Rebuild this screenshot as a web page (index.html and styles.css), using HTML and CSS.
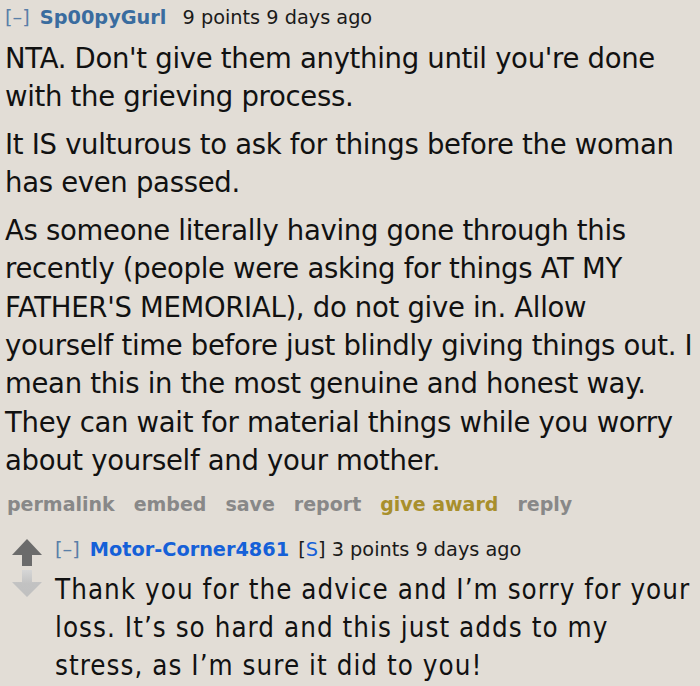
FILE: index.html
```html
<!DOCTYPE html>
<html>
<head>
<meta charset="utf-8">
<link rel="stylesheet" href="styles.css">
</head>
<body>
<div class="comment">
  <div class="tagline">
    <span class="expand">[–]</span>
    <span class="author">Sp00pyGurl</span>
    <span class="score">9 points 9 days ago</span>
  </div>
  <div class="body">
    <p>NTA. Don't give them anything until you're done with the grieving process.</p>
    <p>It IS vulturous to ask for things before the woman has even passed.</p>
    <p>As someone literally having gone through this recently (people were asking for things AT MY FATHER'S MEMORIAL), do not give in. Allow yourself time before just blindly giving things out. I mean this in the most genuine and honest way. They can wait for material things while you worry about yourself and your mother.</p>
  </div>
  <ul class="buttons">
    <li>permalink</li>
    <li>embed</li>
    <li>save</li>
    <li>report</li>
    <li class="award">give award</li>
    <li>reply</li>
  </ul>
  <div class="child">
    <div class="votes">
      <svg class="arrow" width="30" height="28" viewBox="0 0 30 28"><path d="M15 0 L30 16 L20 16 L20 27 L10 27 L10 16 L0 16 Z" fill="#6b6b6b"/></svg>
      <svg class="arrow down" width="30" height="28" viewBox="0 0 30 28">
        <defs><linearGradient id="g" x1="0" y1="0" x2="0" y2="1"><stop offset="0" stop-color="#d6d6d6"/><stop offset="0.5" stop-color="#c2c2c2"/><stop offset="1" stop-color="#c0c0c0"/></linearGradient></defs>
        <path d="M10 0 L20 0 L20 12 L30 12 L15 27 L0 12 L10 12 Z" fill="url(#g)"/></svg>
    </div>
    <div class="entry">
      <div class="tagline">
        <span class="expand">[–]</span>
        <span class="author submitter">Motor-Corner4861</span>
        <span class="score"><span class="flag">[<span class="s">S</span>]</span> 3 points 9 days ago</span>
      </div>
      <div class="body body2">
        <p>Thank you for the advice and I’m sorry for your loss. It’s so hard and this just adds to my stress, as I’m sure it did to you!</p>
      </div>
    </div>
  </div>
</div>
</body>
</html>
```

FILE: styles.css
```css
html, body {
  margin: 0;
  padding: 0;
  background: #e2ddd6;
}
body {
  font-family: "DejaVu Sans", Verdana, sans-serif;
  color: #111;
  width: 700px;
  height: 686px;
  overflow: hidden;
}
.comment {
  padding: 4px 0 0 5px;
}
.tagline {
  font-size: 19.3px;
  line-height: 28px;
  color: #1a1a1a;
}
.expand {
  color: #5a7fa8;
  margin-right: 4px;
}
.author {
  color: #3a6c9f;
  font-weight: bold;
  margin-right: 10px;
}
.author.submitter {
  color: #1560d8;
  margin-right: 3px;
}
.flag .s {
  color: #1560d8;
}
.body {
  margin-top: 7px;
}
.body p {
  margin: 0 0 9.5px 0;
  font-size: 27.5px;
  line-height: 38.3px;
  letter-spacing: -0.3px;
}
.buttons {
  list-style: none;
  margin: 0;
  padding: 0 0 0 2px;
  display: flex;
  gap: 19px;
  font-size: 19px;
  font-weight: bold;
  color: #888888;
  line-height: 30px;
}
.buttons .award {
  color: #a88f2c;
}
.child {
  display: flex;
  margin-top: 17px;
}
.votes {
  width: 50px;
  flex-shrink: 0;
  display: flex;
  flex-direction: column;
  align-items: flex-start;
  padding-left: 7px;
  box-sizing: border-box;
  padding-top: 3px;
  gap: 3px;
}
.entry {
  flex: 1;
}
.body2 {
  margin-top: 6px;
}
.body2 p {
  font-family: "DejaVu Sans Condensed", "DejaVu Sans", sans-serif;
  font-stretch: condensed;
  letter-spacing: 1.05px;
  margin-bottom: 0;
}
```
